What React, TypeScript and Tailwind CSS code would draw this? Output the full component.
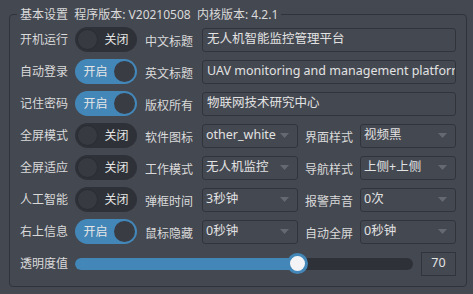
const font = "font-['Noto_Sans','Noto_Sans_CJK_SC',sans-serif]";

interface ToggleProps {
  on: boolean;
}

const Toggle = ({ on }: ToggleProps) => {
  return (
    <div
      className={`flex h-[25px] w-[62px] shrink-0 items-center rounded-full px-[2px] ${
        on ? "flex-row-reverse bg-[#4387b9]" : "bg-[#2e3138]"
      }`}
    >
      <div
        className={`h-[21px] w-[21px] shrink-0 rounded-full ${
          on ? "bg-[#393c43]" : "border border-[#2a2c32] bg-[#373a41]"
        }`}
      />
      <span className="flex-1 text-center text-[12px] leading-none text-[#e6e6e6]">
        {on ? "开启" : "关闭"}
      </span>
    </div>
  );
};

const Label = ({ text }: { text: string }) => (
  <span className="w-[48px] shrink-0 whitespace-nowrap text-[12px] text-[#dadada]">{text}</span>
);

const Input = ({ value }: { value: string }) => (
  <div className="flex h-[24px] w-[254px] shrink-0 items-center overflow-hidden whitespace-nowrap rounded-[3px] border border-[#31343a] px-[4px] text-[12.5px] text-[#e2e2e2]">
    {value}
  </div>
);

const Combo = ({ value }: { value: string }) => (
  <div className="flex h-[24px] w-[96px] shrink-0 items-center justify-between rounded-[3px] border border-[#31343a] pl-[3px] pr-[8px] text-[12.5px] text-[#e2e2e2]">
    <span className="whitespace-nowrap">{value}</span>
    <svg width="9" height="5" viewBox="0 0 9 5">
      <path d="M0 0 L9 0 L4.5 5 Z" fill="#656971" />
    </svg>
  </div>
);

const App = () => {
  const rows: { l1: string; on: boolean; l2: string; field: React.ReactNode }[] = [
    { l1: "开机运行", on: false, l2: "中文标题", field: <Input value="无人机智能监控管理平台" /> },
    { l1: "自动登录", on: true, l2: "英文标题", field: <Input value="UAV monitoring and management platform" /> },
    { l1: "记住密码", on: true, l2: "版权所有", field: <Input value="物联网技术研究中心" /> },
  ];
  const comboRows = [
    { l1: "全屏模式", on: false, l2: "软件图标", c1: "other_white", l3: "界面样式", c2: "视频黑" },
    { l1: "全屏适应", on: false, l2: "工作模式", c1: "无人机监控", l3: "导航样式", c2: "上侧+上侧" },
    { l1: "人工智能", on: false, l2: "弹框时间", c1: "3秒钟", l3: "报警声音", c2: "0次" },
    { l1: "右上信息", on: true, l2: "鼠标隐藏", c1: "0秒钟", l3: "自动全屏", c2: "0秒钟" },
  ];
  const value = 70;

  return (
    <div className={`h-[294px] w-[473px] overflow-hidden bg-[#444851] pt-[6px] ${font}`}>
      <fieldset className="mx-[9px] h-[281px] rounded-[4px] border border-[#30333a] px-[10px]">
        <legend className="-ml-[3px] px-[3px] text-[12px] leading-[17px] text-[#dadada]">
          基本设置 &nbsp;程序版本: V20210508 &nbsp;内核版本: 4.2.1
        </legend>
        <div className="mt-[4px] flex flex-col gap-[7px]">
          {rows.map((r) => (
            <div key={r.l1} className="flex h-[25px] items-center">
              <Label text={r.l1} />
              <div className="ml-[7px]">
                <Toggle on={r.on} />
              </div>
              <div className="ml-[8px]">
                <Label text={r.l2} />
              </div>
              <div className="ml-[9px]">{r.field}</div>
            </div>
          ))}
          {comboRows.map((r) => (
            <div key={r.l1} className="flex h-[25px] items-center">
              <Label text={r.l1} />
              <div className="ml-[7px]">
                <Toggle on={r.on} />
              </div>
              <div className="ml-[8px]">
                <Label text={r.l2} />
              </div>
              <div className="ml-[9px]">
                <Combo value={r.c1} />
              </div>
              <div className="ml-[7px]">
                <Label text={r.l3} />
              </div>
              <div className="ml-[7px]">
                <Combo value={r.c2} />
              </div>
            </div>
          ))}
          <div className="flex h-[25px] items-center">
            <Label text="透明度值" />
            <div className="relative ml-[7px] h-[12px] w-[338px] rounded-full bg-[#2e3138]">
              <div className="h-full w-[223px] rounded-full bg-[#4387b9]" />
              <div className="absolute left-[212px] top-[-5px] h-[21px] w-[21px] rounded-full border-[3px] border-[#4387b9] bg-[#f4f4f6]" />
            </div>
            <div className="ml-[8px] flex h-[24px] w-[35px] items-center justify-center border border-[#31343a] text-[12.5px] text-[#e2e2e2]">
              {value}
            </div>
          </div>
        </div>
      </fieldset>
    </div>
  );
};

export default App;
